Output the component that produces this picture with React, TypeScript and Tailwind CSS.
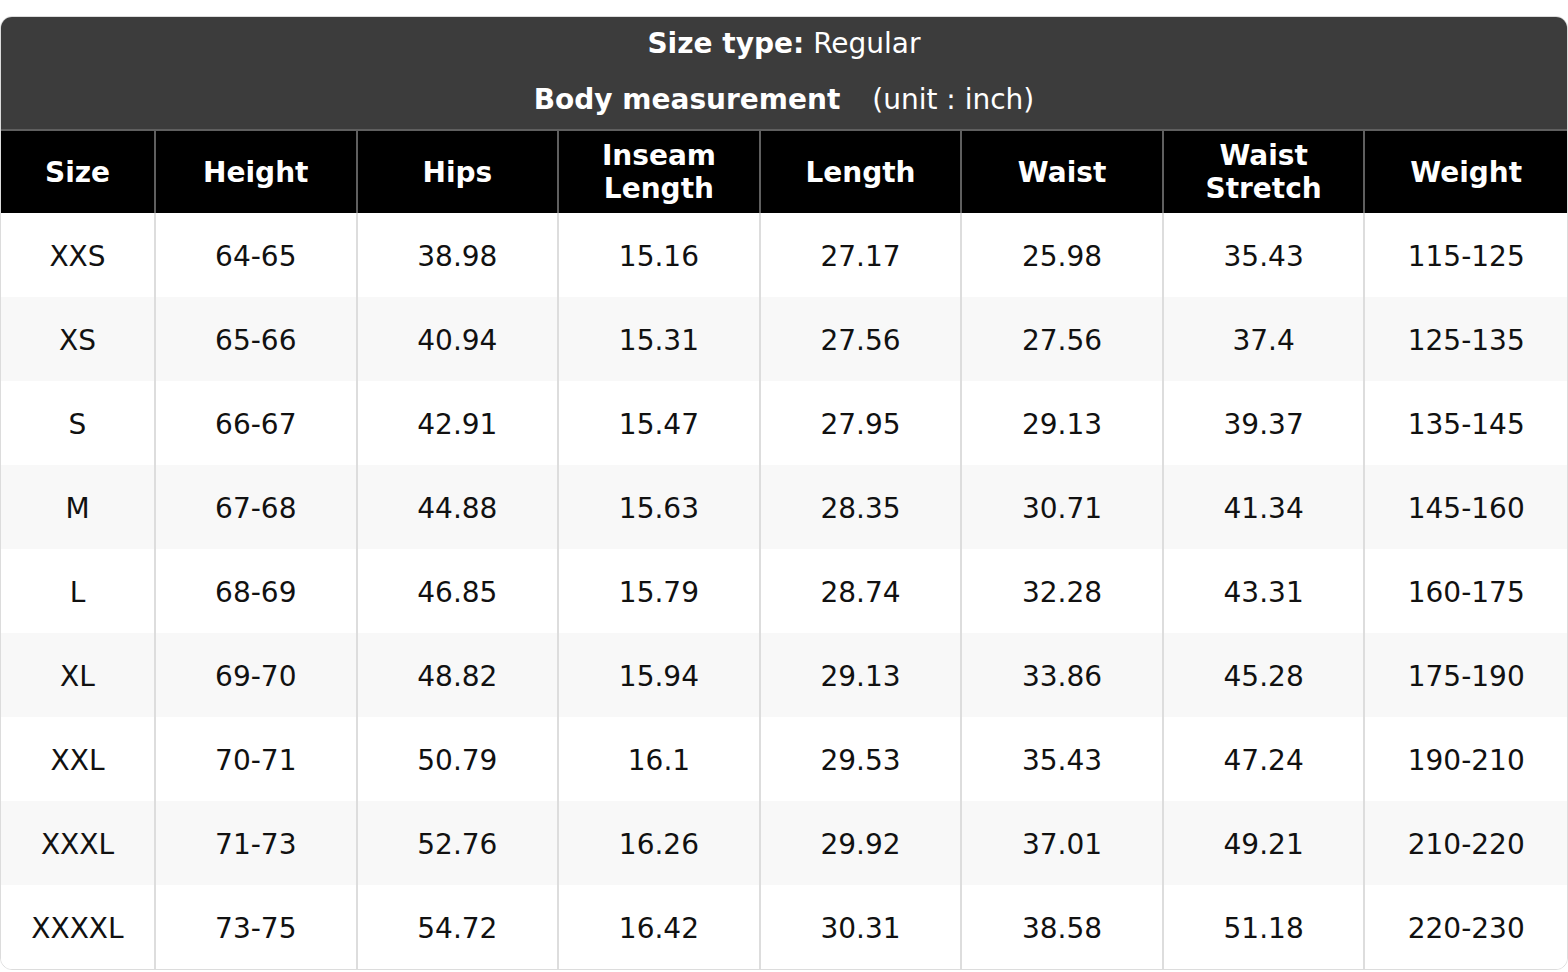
const headers = ['Size', 'Height', 'Hips', 'Inseam\nLength', 'Length', 'Waist', 'Waist\nStretch', 'Weight'];

const rows = [
  ['XXS', '64-65', '38.98', '15.16', '27.17', '25.98', '35.43', '115-125'],
  ['XS', '65-66', '40.94', '15.31', '27.56', '27.56', '37.4', '125-135'],
  ['S', '66-67', '42.91', '15.47', '27.95', '29.13', '39.37', '135-145'],
  ['M', '67-68', '44.88', '15.63', '28.35', '30.71', '41.34', '145-160'],
  ['L', '68-69', '46.85', '15.79', '28.74', '32.28', '43.31', '160-175'],
  ['XL', '69-70', '48.82', '15.94', '29.13', '33.86', '45.28', '175-190'],
  ['XXL', '70-71', '50.79', '16.1', '29.53', '35.43', '47.24', '190-210'],
  ['XXXL', '71-73', '52.76', '16.26', '29.92', '37.01', '49.21', '210-220'],
  ['XXXXL', '73-75', '54.72', '16.42', '30.31', '38.58', '51.18', '220-230'],
];

const App = () => {
  return (
    <div className="bg-white pt-[16px] font-['DejaVu_Sans',sans-serif] text-[28px]">
      <div className="rounded-[12px] border border-[#dcdcdc] overflow-hidden">
        {/* Title block */}
        <div className="bg-[#3c3c3c] text-white h-[112px] flex flex-col">
          <div className="h-[56px] flex items-center justify-center pb-[2px]">
            <span className="font-bold">Size type:</span>
            <span className="ml-[9px]">Regular</span>
          </div>
          <div className="h-[56px] flex items-center justify-center pb-[2px]">
            <span className="font-bold">Body measurement</span>
            <span className="ml-[32px]">(unit : inch)</span>
          </div>
        </div>

        {/* Table */}
        <div className="grid grid-cols-[155px_repeat(7,1fr)]">
          {headers.map((h, i) => (
            <div
              key={h}
              className={`h-[84px] bg-black text-white font-bold flex items-center justify-center text-center whitespace-pre leading-[33px] border-t-2 border-t-[#5f5f5f] ${i < headers.length - 1 ? 'border-r-2 border-r-[#5f5f5f]' : ''}`}
            >
              {h}
            </div>
          ))}
          {rows.map((row, r) =>
            row.map((cell, c) => (
              <div
                key={`${r}-${c}`}
                className={`h-[84px] pt-[4px] flex items-center justify-center text-[#111] ${r % 2 === 1 ? 'bg-[#f8f8f8]' : 'bg-white'} ${c < row.length - 1 ? 'border-r-2 border-r-[#dddddd]' : ''}`}
              >
                {cell}
              </div>
            ))
          )}
        </div>
      </div>
    </div>
  );
};

export default App;
